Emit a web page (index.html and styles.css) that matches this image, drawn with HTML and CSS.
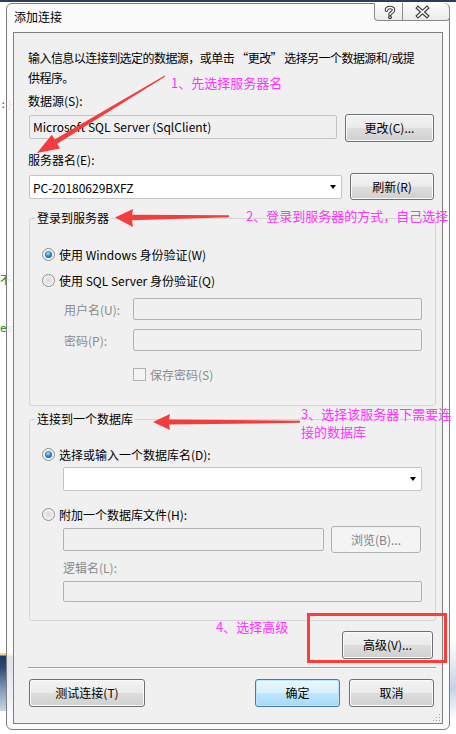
FILE: index.html
```html
<!DOCTYPE html>
<html lang="zh-CN">
<head>
<meta charset="utf-8">
<title>添加连接</title>
<link rel="stylesheet" href="styles.css">
</head>
<body>
<div class="topline"></div>
<div class="bgfrag frag-red">:}</div>
<div class="bgfrag frag-green1">不</div>
<div class="bgfrag frag-green2">es</div>
<div class="bgbar"></div>
<div class="bgbar-right"></div>

<div class="window">
  <div class="titlebar">
    <span class="title">添加连接</span>
    <div class="caption">
      <div class="cbtn help">
        <svg width="27" height="17" viewBox="0 0 27 17">
          <path d="M11.5 7.2 C11.5 3.6 18.5 3.6 18.5 7 C18.5 9.6 15 9.4 15 11.6" fill="none" stroke="#3a3a3a" stroke-width="3.6" stroke-linecap="round"/>
          <path d="M11.5 7.2 C11.5 3.6 18.5 3.6 18.5 7 C18.5 9.6 15 9.4 15 11.6" fill="none" stroke="#ffffff" stroke-width="1.5" stroke-linecap="round"/>
          <circle cx="15" cy="14.3" r="1.9" fill="#3a3a3a"/>
          <circle cx="15" cy="14.3" r="0.8" fill="#ffffff"/>
        </svg>
      </div>
      <div class="cbtn close">
        <svg width="46" height="17" viewBox="0 0 46 17">
          <path d="M15 5 L24 13 M24 5 L15 13" fill="none" stroke="#3a3a3a" stroke-width="3.8" stroke-linecap="square"/>
          <path d="M15 5 L24 13 M24 5 L15 13" fill="none" stroke="#ffffff" stroke-width="1.6" stroke-linecap="square"/>
        </svg>
      </div>
    </div>
  </div>

  <div class="client">
    <p class="desc">输入信息以连接到选定的数据源，或单击 “更改” 选择另一个数据源和/或提<br>供程序。</p>
    <div class="label ds-label">数据源(S):</div>
    <div class="ds-row">
      <div class="textbox readonly ds-box">Microsoft SQL Server (SqlClient)</div>
      <div class="btn change-btn">更改(C)...</div>
    </div>
    <div class="label server-label">服务器名(E):</div>
    <div class="server-row">
      <div class="combo server-combo"><span>PC-20180629BXFZ</span><i class="arrow"></i></div>
      <div class="btn refresh-btn">刷新(R)</div>
    </div>

    <fieldset class="group login-group">
      <legend>登录到服务器</legend>
      <div class="radio-row r-win"><span class="radio on"></span><span>使用 Windows 身份验证(W)</span></div>
      <div class="radio-row r-sql"><span class="radio"></span><span>使用 SQL Server 身份验证(Q)</span></div>
      <div class="field-row user-row"><span class="flabel">用户名(U):</span><div class="textbox disabled cred-box"></div></div>
      <div class="field-row pass-row"><span class="flabel">密码(P):</span><div class="textbox disabled cred-box"></div></div>
      <div class="check-row"><span class="checkbox"></span><span class="dim">保存密码(S)</span></div>
    </fieldset>

    <fieldset class="group db-group">
      <legend>连接到一个数据库</legend>
      <div class="radio-row r-dbname"><span class="radio on"></span><span>选择或输入一个数据库名(D):</span></div>
      <div class="combo db-combo"><i class="arrow"></i></div>
      <div class="radio-row r-attach"><span class="radio"></span><span>附加一个数据库文件(H):</span></div>
      <div class="file-row">
        <div class="textbox disabled file-box"></div>
        <div class="btn disabled browse-btn">浏览(B)...</div>
      </div>
      <div class="dim logical-label">逻辑名(L):</div>
      <div class="textbox disabled logical-box"></div>
    </fieldset>

    <div class="adv-row"><div class="btn adv-btn">高级(V)...</div></div>
    <div class="separator"></div>
    <div class="bottom-row">
      <div class="btn test-btn">测试连接(T)</div>
      <div class="btn default ok-btn">确定</div>
      <div class="btn cancel-btn">取消</div>
    </div>

    <svg class="grip" width="8" height="8" viewBox="0 0 8 8">
      <rect x="6" y="0" width="1" height="1" fill="#9a9a9a"/>
      <rect x="3" y="3" width="1" height="1" fill="#9a9a9a"/>
      <rect x="6" y="3" width="1" height="1" fill="#9a9a9a"/>
      <rect x="0" y="6" width="1" height="1" fill="#9a9a9a"/>
      <rect x="3" y="6" width="1" height="1" fill="#9a9a9a"/>
      <rect x="6" y="6" width="1" height="1" fill="#9a9a9a"/>
      <rect x="7" y="1" width="1" height="1" fill="#ffffff"/>
      <rect x="4" y="4" width="1" height="1" fill="#ffffff"/>
      <rect x="7" y="4" width="1" height="1" fill="#ffffff"/>
      <rect x="1" y="7" width="1" height="1" fill="#ffffff"/>
      <rect x="4" y="7" width="1" height="1" fill="#ffffff"/>
      <rect x="7" y="7" width="1" height="1" fill="#ffffff"/>
    </svg>
  </div>
</div>

<div class="notes">
  <svg class="arrows" width="456" height="734" viewBox="0 0 456 734">
    <polygon points="37,153 60,148.5 57.2,143.7 165.3,76.6 164.7,75.4 54.6,139.5 51.8,134.7" fill="#f43c3c"/>
    <polygon points="115,217.5 133,227 132,220.3 229,217.3 229,215.3 132,214.8 133,209" fill="#f43c3c"/>
    <polygon points="153,422 170,430 169,424.6 300,422.8 300,420.8 169,419.4 170,414" fill="#f43c3c"/>
  </svg>
  <div class="note note1">1、先选择服务器名</div>
  <div class="note note2">2、登录到服务器的方式，自己选择</div>
  <div class="note note3a">3、选择该服务器下需要连</div>
  <div class="note note3b">接的数据库</div>
  <div class="note note4">4、选择高级</div>
  <div class="redbox"></div>
</div>
</body>
</html>
```

FILE: styles.css
```css
* { box-sizing: border-box; }
html, body { margin: 0; padding: 0; }
body {
  width: 456px;
  height: 734px;
  overflow: hidden;
  position: relative;
  background: #ffffff;
  font-family: "Noto Sans CJK SC", "Microsoft YaHei", sans-serif;
  font-size: 12px;
  color: #000;
}

/* desktop behind the dialog */
.topline { height: 2px; background: #2f3e57; }
.bgfrag { position: absolute; left: 0; font-size: 11px; line-height: 12px; }
.frag-red { top: 99px; color: #b42020; font-family: "DejaVu Sans Mono", monospace; }
.frag-green1 { top: 273px; color: #0a8a0a; }
.frag-green2 { top: 323px; color: #0a8a0a; font-family: "DejaVu Sans Mono", monospace; }
.bgbar {
  position: absolute; left: 0; top: 653px; width: 14px; height: 58px;
  background: linear-gradient(#f2d489 0, #f2d489 2px, #23375a 3px, #2d4770 14px, #7a91b5 34px, #cad6e7 58px);
}
.bgbar-right {
  position: absolute; right: 0; top: 640px; width: 6px; height: 80px;
  background: linear-gradient(#ffffff, #c6d3e6 60%, #ffffff);
}

/* window */
.window {
  position: relative;
  z-index: 1;
  margin: 1px 0 0 6px;
  width: 444px;
  height: 727px;
  border: 1px solid #7d7d7d;
  border-radius: 6px;
  background: rgba(250, 250, 250, 0.88);
  display: flex;
  flex-direction: column;
}
.titlebar {
  height: 28px;
  display: flex;
  align-items: flex-start;
  padding-left: 7px;
  flex: none;
}
.title { margin-top: 3px; line-height: 20px; }
.caption {
  margin: -1px -1px 0 auto;
  display: flex;
  height: 18px;
  border: 1px solid #8a8a8a;
  border-top: none;
  border-radius: 0 6px 4px 4px;
  overflow: hidden;
  background: linear-gradient(#fdfdfd, #ebebeb);
}
.cbtn { height: 17px; display: flex; }
.cbtn.help { width: 28px; border-right: 1px solid #8a8a8a; }
.cbtn.close { width: 46px; }

.client {
  flex: 1;
  position: relative;
  margin: 0 6px 5px 6px;
  border: 1px solid #7f7f7f;
  background: #f0f0f0;
  padding: 15px 8px 0 14px;
}
.desc { margin: 0; line-height: 20px; white-space: nowrap; letter-spacing: -0.55px; }
.label { line-height: 20px; }
.ds-label { margin-top: 3px; }
.ds-row { display: flex; margin-top: 3px; height: 28px; }
.ds-box {
  width: 308px; height: 24px; margin: 1px 0 0 1px;
  padding-left: 3px; line-height: 22px;
}
.change-btn { margin-left: 8px; width: 89px; height: 28px; }
.server-label { margin-top: 8px; }
.server-row { display: flex; margin-top: 3px; height: 27px; }
.server-combo { width: 313px; height: 24px; margin: 2px 0 0 1px; }
.refresh-btn { margin-left: 8px; width: 84px; height: 27px; }

/* controls */
.textbox { border: 1px solid #abadb3; border-radius: 2px; background: #fff; }
.textbox.readonly { background: #f0f0f0; border-color: #c4c4c4; }
.textbox.disabled { background: #f0f0f0; border-color: #b2b2b2; }
.combo {
  display: flex; align-items: center;
  border: 1px solid #c4c4c4; border-radius: 2px;
  background: #fff; padding-left: 3px;
}
.arrow {
  margin-left: auto; margin-right: 5px;
  width: 0; height: 0;
  border-top: 4px solid #000;
  border-left: 3px solid transparent;
  border-right: 3px solid transparent;
}
.btn {
  display: flex; align-items: center; justify-content: center;
  border: 1px solid #707070;
  border-radius: 3px;
  background: linear-gradient(to bottom, #f3f3f3 0%, #ebebeb 48%, #dddddd 52%, #d0d0d0 100%);
  box-shadow: inset 0 0 0 1px #fbfbfb;
  line-height: 16px;
}
.btn.default {
  border-color: #3c7fb1;
  box-shadow: inset 0 0 0 1px #bfe6f8;
  background: linear-gradient(to bottom, #eaf6fd 0%, #d9f0fc 48%, #bee6fd 52%, #a7d9f5 100%);
}
.btn.disabled {
  border-color: #adb2b5;
  background: #f4f4f4;
  box-shadow: none;
  color: #838383;
}
.radio {
  flex: none;
  position: relative;
  width: 13px; height: 13px;
  border-radius: 50%;
  border: 1px solid #8f8f8f;
  background: radial-gradient(circle at 50% 50%, #d6d6d6 0, #f6f6f6 75%);
}
.radio.on::after {
  content: "";
  position: absolute;
  left: 2px; top: 2px;
  width: 7px; height: 7px;
  border-radius: 50%;
  background: radial-gradient(circle at 45% 35%, #a8e2ff 0, #2c8bd3 45%, #0f4a86 100%);
}
.checkbox {
  flex: none;
  width: 13px; height: 13px;
  border: 1px solid #b1b1b1;
  background: #f4f4f4;
}
.dim, .flabel { color: #8b8b8b; }

/* group boxes */
.group {
  margin: 8px 0 0 1px;
  padding: 0 0 23px 0;
  width: 407px;
  min-inline-size: 0;
  border: 1px solid #d5d5d5;
  border-radius: 3px;
}
.group legend {
  margin-left: 5px;
  padding: 0 2px;
  line-height: 20px;
}
.radio-row {
  display: flex; align-items: center; gap: 4px;
  height: 20px; margin-left: 12px;
}
.r-win { margin-top: 16px; }
.r-sql { margin-top: 6px; }
.field-row { display: flex; align-items: center; height: 22px; margin-left: 34px; }
.flabel { width: 69px; flex: none; }
.cred-box { width: 289px; height: 22px; }
.user-row { margin-top: 8px; }
.pass-row { margin-top: 9px; }
.check-row {
  display: flex; align-items: center; gap: 4px;
  height: 16px; margin: 15px 0 0 103px;
}

.db-group { margin-top: 3px; padding-bottom: 18px; }
.r-dbname { margin-top: 15px; }
.db-combo { margin: 3px 0 0 33px; width: 359px; height: 24px; }
.r-attach { margin-top: 13px; }
.file-row { display: flex; margin: 2px 0 0 33px; height: 27px; }
.file-box { width: 261px; height: 23px; margin-top: 2px; }
.browse-btn { margin-left: 7px; width: 90px; height: 27px; }
.logical-label { margin: 5px 0 0 33px; line-height: 20px; }
.logical-box { margin: 3px 0 0 33px; width: 359px; height: 21px; }

.adv-row { display: flex; justify-content: flex-end; margin-top: 10px; }
.adv-btn { width: 91px; height: 28px; margin-right: 1px; }
.separator {
  margin-top: 8px;
  width: 408px;
  height: 2px;
  border-top: 1px solid #a0a0a0;
  border-bottom: 1px solid #ffffff;
}
.bottom-row { display: flex; margin-top: 10px; height: 28px; }
.test-btn { margin-left: 1px; width: 116px; }
.ok-btn { margin-left: auto; width: 85px; }
.cancel-btn { margin-left: 9px; width: 85px; }
.grip { position: absolute; right: 1px; bottom: 1px; }

/* annotations drawn over the screenshot */
.notes { position: absolute; left: 0; top: 0; width: 456px; height: 734px; z-index: 5; pointer-events: none; }
.arrows { position: absolute; left: 0; top: 0; }
.note {
  position: absolute;
  font-size: 13px;
  line-height: 20px;
  color: #ff33ff;
  white-space: nowrap;
}
.note1 { left: 171px; top: 73px; }
.note2 { left: 246px; top: 206px; }
.note3a { left: 301px; top: 406px; line-height: 16px; }
.note3b { left: 301px; top: 424px; line-height: 16px; }
.note4 { left: 216px; top: 617px; }
.redbox {
  position: absolute;
  left: 307px; top: 613px;
  width: 140px; height: 50px;
  border: 3px solid #ff3b3b;
}
```
